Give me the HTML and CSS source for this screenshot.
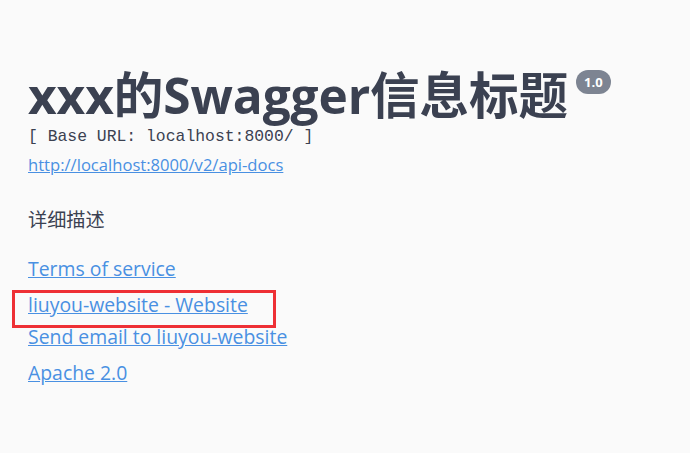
FILE: index.html
```html
<!DOCTYPE html>
<html lang="zh">
<head>
<meta charset="utf-8">
<title>Swagger UI</title>
<link rel="stylesheet" href="styles.css">
</head>
<body>
<div class="info">
  <h2 class="title">xxx的Swagger信息标题<span class="version">1.0</span></h2>
  <pre class="base-url">[ Base URL: localhost:8000/ ]</pre>
  <a class="url" href="#">http://localhost:8000/v2/api-docs</a>
  <div class="description">详细描述</div>
  <div class="links">
    <a class="link terms" href="#">Terms of service</a>
    <a class="link website" href="#">liuyou-website - Website</a>
    <a class="link email" href="#">Send email to liuyou-website</a>
    <a class="link license" href="#">Apache 2.0</a>
  </div>
  <div class="highlight"></div>
</div>
</body>
</html>
```
FILE: styles.css
```css
html, body {
  margin: 0;
  padding: 0;
  background: #fafafa;
}
body {
  width: 690px;
  height: 453px;
  overflow: hidden;
  font-family: "Open Sans", "Noto Sans CJK SC", sans-serif;
  color: #3b4151;
}
.info {
  position: relative;
  padding: 67px 0 0 28px;
}
.title {
  margin: 0;
  font-size: 49.6px;
  line-height: 56px;
  font-weight: 700;
  color: #3b4151;
  white-space: nowrap;
  letter-spacing: -0.1px;
}
.version {
  display: inline-block;
  vertical-align: top;
  margin: 3px 0 0 8px;
  padding: 0 8px;
  height: 24px;
  line-height: 24px;
  border-radius: 12px;
  background: #7d8492;
  color: #fff;
  font-size: 13px;
  font-weight: 700;
  letter-spacing: 0;
}
.base-url {
  margin: 3px 0 0;
  font-family: "Liberation Mono", monospace;
  font-size: 16.4px;
  line-height: 22px;
  color: #3b4151;
}
.url {
  display: block;
  margin-top: 6px;
  font-size: 16.6px;
  line-height: 22px;
  color: #4990e2;
  width: max-content;
}
.description {
  margin-top: 31px;
  font-size: 19.2px;
  line-height: 26px;
}
.links {
  display: flex;
  flex-direction: column;
  align-items: flex-start;
  margin-top: 23px;
}
.link {
  font-size: 19.4px;
  line-height: 26px;
  color: #4990e2;
}
.website { margin-top: 10px; }
.email { margin-top: 6px; }
.license { margin-top: 10px; }
.highlight {
  position: absolute;
  left: 12px;
  top: 290px;
  width: 258px;
  height: 32px;
  border: 3px solid #ee3035;
}
```
